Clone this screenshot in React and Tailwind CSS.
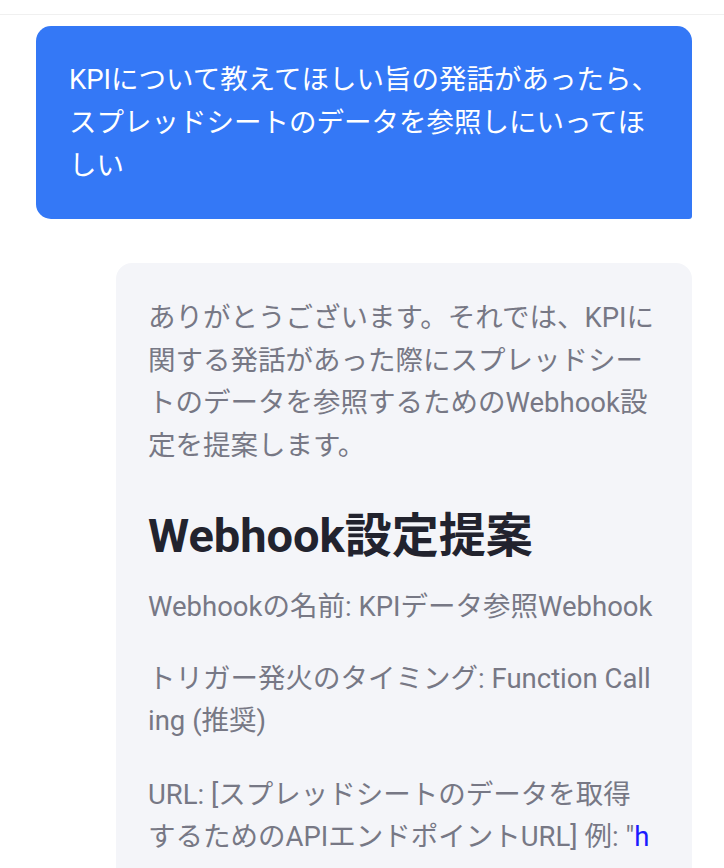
import React from "react";

const font = { fontFamily: 'Roboto, "Noto Sans CJK JP", sans-serif' };

function Lines({ lines }) {
  return lines.map((l, i) => (
    <span key={i} className="block whitespace-nowrap">
      {l}
    </span>
  ));
}

export default function App() {
  return (
    <div className="min-h-screen bg-white" style={font}>
      <div className="h-[15px] border-b border-[#f0f0f0] bg-white" />
      <div className="flex flex-col pt-[11px]">
        <div className="ml-[36px] mr-[32px] rounded-[15px] rounded-br-[3px] bg-[#3478f6] px-[33px] py-[32px] text-[27.5px] leading-[43px] text-white">
          <Lines
            lines={[
              "KPIについて教えてほしい旨の発話があったら、",
              "スプレッドシートのデータを参照しにいってほ",
              "しい",
            ]}
          />
        </div>

        <div className="mt-[44px] ml-[116px] mr-[32px] rounded-t-[16px] bg-[#f4f5f9] px-[32px] pt-[34px] pb-[60px] text-[27.5px] leading-[42.5px] text-[#777885]">
          <p>
            <Lines
              lines={[
                "ありがとうございます。それでは、KPIに",
                "関する発話があった際にスプレッドシー",
                "トのデータを参照するためのWebhook設",
                "定を提案します。",
              ]}
            />
          </p>
          <h2 className="mt-[38px] text-[47px] font-bold leading-[61px] text-[#22232e]">
            Webhook設定提案
          </h2>
          <p className="mt-[20px]">Webhookの名前: KPIデータ参照Webhook</p>
          <p className="mt-[29px]">
            <Lines lines={["トリガー発火のタイミング: Function Call", "ing (推奨)"]} />
          </p>
          <p className="mt-[31px]">
            <span className="block whitespace-nowrap">URL: [スプレッドシートのデータを取得</span>
            <span className="block whitespace-nowrap">
              するためのAPIエンドポイントURL] 例: "<span className="text-[#1a1aff]">h</span>
            </span>
          </p>
        </div>
      </div>
    </div>
  );
}
